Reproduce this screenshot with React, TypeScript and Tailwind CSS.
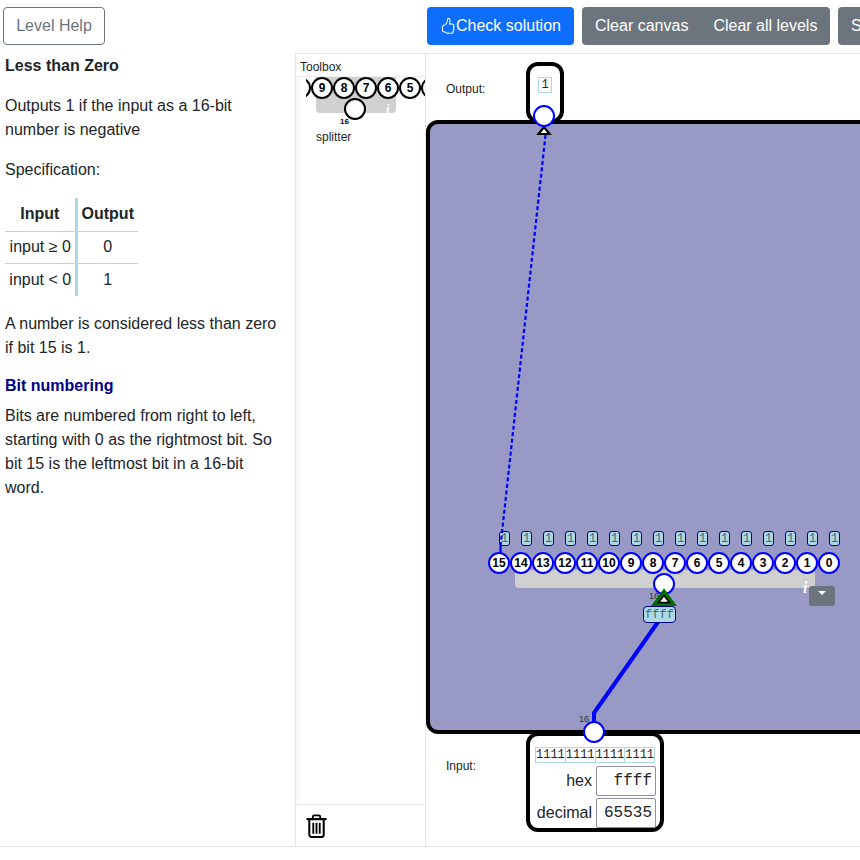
import React from "react";
import { BsHandThumbsUp } from "react-icons/bs";

const sans = "font-['Liberation_Sans',Arial,sans-serif]";
const mono = "font-['Liberation_Mono','DejaVu_Sans_Mono',monospace]";

const toolboxPins = ["", "9", "8", "7", "6", "5", ""];
const bits = Array.from({ length: 16 }, (_, i) => 15 - i);

function Trash() {
  return (
    <svg width="21" height="24" viewBox="0 0 22 26" fill="none">
      <path d="M7 4.5V3a1.5 1.5 0 0 1 1.5-1.5h5A1.5 1.5 0 0 1 15 3v1.5" stroke="#000" strokeWidth="2" />
      <path d="M1 5.5h20" stroke="#000" strokeWidth="2.4" strokeLinecap="round" />
      <path d="M3.2 6v16.5A2.5 2.5 0 0 0 5.7 25h10.6a2.5 2.5 0 0 0 2.5-2.5V6" stroke="#000" strokeWidth="2.2" />
      <path d="M7.5 9.5v12M11 9.5v12M14.5 9.5v12" stroke="#000" strokeWidth="2" />
    </svg>
  );
}

function Pin({ label, className = "" }: { label?: string; className?: string }) {
  return (
    <div className={`flex h-[22px] w-[22px] shrink-0 items-center justify-center rounded-full border-[2.5px] border-[#0000ff] bg-white text-[12px] font-bold text-black ${className}`}>
      {label}
    </div>
  );
}

function ValueField({ label, value }: { label: string; value: string }) {
  return (
    <div className="flex items-center justify-end gap-[4px]">
      <span>{label}</span>
      <div className={`h-[30px] w-[60px] rounded-[2px] border border-[#8f8f9d] pr-[3px] text-right leading-[29px] ${mono}`}>{value}</div>
    </div>
  );
}

function Canvas() {
  return (
    <div className="relative flex-1 overflow-hidden">
      <div className="absolute left-[100px] top-[8px] flex h-[61px] w-[38px] justify-center rounded-[12px] border-[4px] border-black bg-white pt-[11px]">
        <div className={`h-[16px] w-[14px] border border-[#add8e6] text-center text-[12px] leading-[14px] ${mono}`}>1</div>
      </div>
      <span className="absolute left-[20px] top-[27px] text-[12px] leading-[16px]">Output:</span>

      <div className="absolute left-0 top-[66px] h-[614px] w-[520px] rounded-[12px] border-[4px] border-black bg-[#9999c6]" />

      <span className="absolute left-[20px] top-[704px] text-[12px] leading-[16px]">Input:</span>
      <div className="absolute left-[100px] top-[678px] flex h-[100px] w-[138px] flex-col rounded-[12px] border-[4px] border-black bg-white px-[4px] pt-[11px]">
        <div className={`ml-[1px] flex h-[16px] w-[120px] border border-[#add8e6] text-[12px] leading-[14px] ${mono}`}>
          {[0, 1, 2, 3].map((i) => (
            <span key={i} className="flex-1 overflow-hidden border-r border-[#add8e6] text-center last:border-r-0">1111</span>
          ))}
        </div>
        <div className="mt-[3px] flex flex-col gap-[2px]">
          <ValueField label="hex" value="ffff" />
          <ValueField label="decimal" value="65535" />
        </div>
      </div>

      {/* splitter node */}
      <div className="absolute left-[62px] top-[477px] flex w-[352px] flex-col">
        <div className="ml-[11px] flex">
          {bits.map((b) => (
            <div key={b} className={`mr-[11px] flex h-[15px] w-[11px] shrink-0 items-center justify-center rounded-[3px] border border-[#00008b] bg-[#add8e6] text-[12px] text-[#4a6670] ${mono}`}>1</div>
          ))}
        </div>
        <div className="relative mt-[6px] flex">
          <div className="absolute left-[27px] top-[18px] h-[18px] w-[300px] rounded-b-[4px] bg-[#d0d0d0]" />
          {bits.map((b) => (
            <Pin key={b} label={String(b)} className="relative" />
          ))}
        </div>
      </div>

      <svg className="absolute left-0 top-0" width="440" height="800" fill="none">
        <path d="M119.5 81 L74.5 492" stroke="#0000ff" strokeWidth="2.2" strokeDasharray="4 2.5" />
        <path d="M74.5 492 L74.5 499" stroke="#0000ff" strokeWidth="2.2" />
        <path d="M168 668 L168 659 L232 568" stroke="#0000ff" strokeWidth="4" />
        <path d="M118 73 L112.5 80 L123.5 80 Z" fill="#fff" stroke="#000" strokeWidth="2.2" />
      </svg>

      <Pin className="absolute left-[227px] top-[519px]" />
      <span className="absolute left-[223px] top-[537px] text-[9px] leading-[10px] text-[#333]">16</span>
      <svg className="absolute left-[224px] top-[533px]" width="28" height="20" fill="none">
        <path d="M14 3 L3 18 L25 18 Z" fill="#006e00" stroke="#006e00" strokeWidth="2" />
        <path d="M14 8.5 L8.5 15.5 L19.5 15.5 Z" fill="#fff" stroke="#000" strokeWidth="1.6" />
      </svg>
      <div className={`absolute left-[217px] top-[552px] flex h-[17px] w-[33px] items-center justify-center rounded-[4px] border border-[#00008b] bg-[#add8e6] text-[12px] text-[#4a6670] ${mono}`}>ffff</div>
      <span className="absolute left-[377px] top-[526px] font-['Liberation_Serif',serif] text-[16px] font-bold italic leading-[16px] text-white">i</span>
      <div className="absolute left-[383px] top-[532px] flex h-[20px] w-[26px] justify-center rounded-[3px] bg-[#6c757d] pt-[5px]">
        <div className="h-0 w-0 border-x-[4.5px] border-t-[4.5px] border-x-transparent border-t-white" />
      </div>

      <Pin className="absolute left-[157px] top-[667px]" />
      <span className="absolute left-[153px] top-[660px] text-[9px] leading-[10px] text-[#333]">16</span>
      <Pin className="absolute left-[107px] top-[51px]" />
    </div>
  );
}

function Toolbox() {
  return (
    <div className="relative flex-1 bg-gradient-to-r from-[#f8f8f8] to-white to-[6px]">
      <div className="absolute left-[20px] top-0 h-[36px] w-[80px] rounded-b-[4px] bg-[#d0d0d0]" />
      <div className="absolute inset-x-0 top-0 overflow-hidden pl-[10px]">
        <div className="overflow-hidden">
          <div className="-ml-[17px] flex">
            {toolboxPins.map((p, i) => (
              <div key={i} className="flex h-[22px] w-[22px] shrink-0 items-center justify-center rounded-full border-[2.5px] border-black bg-white text-[12px] font-bold text-black">{p}</div>
            ))}
          </div>
        </div>
      </div>
      <div className="absolute left-[48px] top-[21px] h-[22px] w-[22px] rounded-full border-[2.5px] border-black bg-white" />
      <span className="absolute left-[44px] top-[40px] text-[8px] font-bold leading-[10px] text-black">16</span>
      <span className="absolute left-[90px] top-[26px] font-['Liberation_Serif',serif] text-[12px] font-bold italic leading-[12px] text-white">i</span>
      <span className="absolute left-[20px] top-[52px] text-[12px] leading-[16px]">splitter</span>
    </div>
  );
}

export default function App() {
  return (
    <div className={`h-[860px] w-[860px] overflow-hidden bg-white text-[16px] leading-[24px] text-[#212529] ${sans}`}>
      <div className="flex h-[53px] items-start whitespace-nowrap pt-[7px]">
        <button className="ml-[3px] h-[38px] w-[102px] shrink-0 rounded-[4px] border border-[#6c757d] text-[#6c757d]">Level Help</button>
        <button className="ml-[322px] flex h-[38px] w-[147px] shrink-0 items-center justify-center rounded-[4px] bg-[#0d6efd] text-white">
          <BsHandThumbsUp className="h-[16px] w-[16px]" />
          Check solution
        </button>
        <div className="ml-[8px] flex h-[38px] w-[248px] shrink-0 rounded-[4px] bg-[#6c757d] text-white">
          <button className="px-[13px]">Clear canvas</button>
          <button className="px-[12px]">Clear all levels</button>
        </div>
        <button className="ml-[8px] h-[38px] w-[80px] shrink-0 rounded-[4px] bg-[#6c757d] pl-[13px] text-left text-white">Save</button>
      </div>

      <div className="flex h-[794px] border-b border-[#e5e5e5]">
        <div className="w-[295px] shrink-0 pl-[5px] pr-[10px] pt-[1px]">
          <div className="font-bold">Less than Zero</div>
          <p className="mt-[16px]">Outputs 1 if the input as a 16-bit number is negative</p>
          <p className="mt-[16px]">Specification:</p>
          <table className="mt-[16px] border-collapse whitespace-nowrap text-center">
            <thead>
              <tr className="h-[33px] border-b border-[#add8e6]">
                <th className="w-[71px] border-r-[3px] border-[#add8e6] font-bold">Input</th>
                <th className="w-[62px] font-bold">Output</th>
              </tr>
            </thead>
            <tbody>
              <tr className="h-[32px] border-b border-[#add8e6]">
                <td className="border-r-[3px] border-[#add8e6] pl-[4px] pr-[3px]">input ≥ 0</td>
                <td>0</td>
              </tr>
              <tr className="h-[33px]">
                <td className="border-r-[3px] border-[#add8e6] pl-[4px] pr-[3px]">input &lt; 0</td>
                <td>1</td>
              </tr>
            </tbody>
          </table>
          <p className="mt-[16px]">A number is considered less than zero if bit 15 is 1.</p>
          <div className="mt-[14px] font-bold text-[#00008b]">Bit numbering</div>
          <p className="mt-[6px]">Bits are numbered from right to left, starting with 0 as the rightmost bit. So bit 15 is the leftmost bit in a 16-bit word.</p>
        </div>

        <div className="flex w-[131px] shrink-0 flex-col border-x border-t border-[#e5e5e5]">
          <div className="h-[23px] border-b border-[#f0f0f0] pl-[4px] text-[12px] leading-[26px]">Toolbox</div>
          <Toolbox />
          <div className="flex h-[42px] items-center border-t border-[#e5e5e5] pl-[10px]">
            <Trash />
          </div>
        </div>

        <div className="flex flex-1 flex-col border-t border-[#e5e5e5]">
          <Canvas />
        </div>
      </div>
    </div>
  );
}
